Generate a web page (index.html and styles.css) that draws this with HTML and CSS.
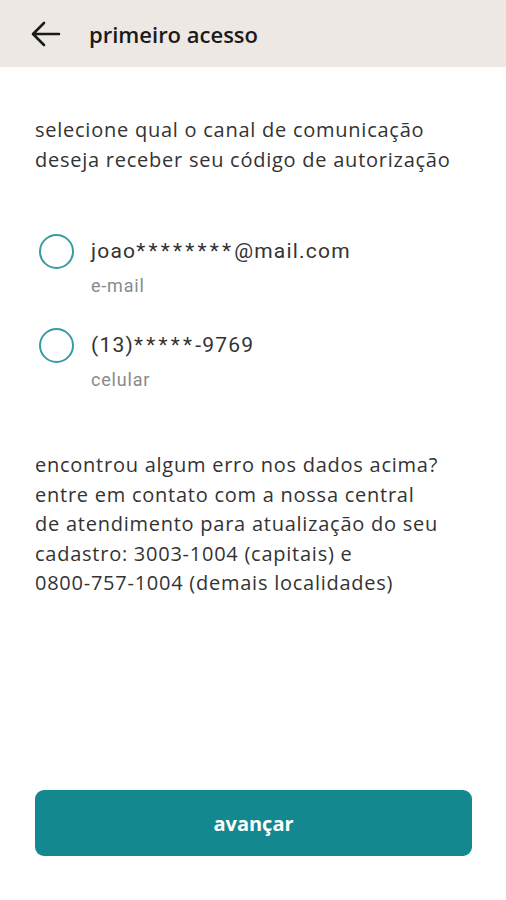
FILE: index.html
```html
<!DOCTYPE html>
<html lang="pt-BR">
<head>
    <meta charset="UTF-8">
    <meta name="viewport" content="width=device-width, initial-scale=1.0">
    <title>primeiro acesso</title>
    <link rel="stylesheet" href="styles.css">
</head>
<body>
    <div class="app">
        <header class="topbar">
            <button class="back" aria-label="voltar">
                <svg width="30" height="26" viewBox="0 0 30 26">
                    <path d="M28 13H3M13 2L2 13l11 11" fill="none" stroke="#1a1a1a" stroke-width="2.6" stroke-linecap="round" stroke-linejoin="round"/>
                </svg>
            </button>
            <h1>primeiro acesso</h1>
        </header>

        <main class="content">
            <p class="intro">selecione qual o canal de comunicação<br>deseja receber seu código de autorização</p>

            <!-- canais de comunicação -->
            <div class="options">
                <label class="option">
                    <input type="radio" name="canal" value="email">
                    <span class="radio"></span>
                    <span class="option-text">
                        <span class="option-value">joao<span class="mask">********</span>@mail.com</span>
                        <span class="option-label">e-mail</span>
                    </span>
                </label>
                <label class="option">
                    <input type="radio" name="canal" value="celular">
                    <span class="radio"></span>
                    <span class="option-text">
                        <span class="option-value">(13)<span class="mask">*****</span>-9769</span>
                        <span class="option-label">celular</span>
                    </span>
                </label>
            </div>

            <p class="help">encontrou algum erro nos dados acima?<br>entre em contato com a nossa central<br>de atendimento para atualização do seu<br>cadastro: 3003-1004 (capitais) e<br>0800-757-1004 (demais localidades)</p>
        </main>

        <div class="footer">
            <button class="next">avançar</button>
        </div>
    </div>
</body>
</html>
```

FILE: styles.css
```css
body {
    margin: 0;
    font-family: "Open Sans", sans-serif;
    background-color: #ffffff;
    color: #2b2b2b;
}
.app {
    height: 900px;
    display: flex;
    flex-direction: column;
}
.topbar {
    height: 67px;
    background-color: #ede8e3;
    display: flex;
    align-items: center;
    padding: 0 0 0 31px;
    box-sizing: border-box;
    flex-shrink: 0;
}
.back {
    background: none;
    border: none;
    padding: 0;
    width: 30px;
    height: 26px;
    margin-right: 28px;
    cursor: pointer;
}
.topbar h1 {
    margin: 0;
    font-size: 22px;
    font-weight: 600;
    color: #1a1a1a;
    letter-spacing: 0;
}
.content {
    flex-grow: 1;
    padding: 48px 35px 0 35px;
}
.intro, .help {
    margin: 0;
    font-size: 20px;
    line-height: 29.5px;
    letter-spacing: 0.75px;
    color: #333;
}
.options {
    margin-top: 60px;
    display: flex;
    flex-direction: column;
    gap: 24px;
}
.option {
    display: flex;
    align-items: flex-start;
    cursor: pointer;
}
.option input {
    display: none;
}
.radio {
    width: 31px;
    height: 31px;
    border: 2px solid #3a9ca1;
    border-radius: 50%;
    margin: 0 17px 0 4px;
    flex-shrink: 0;
}
.option-text {
    display: flex;
    flex-direction: column;
    font-family: Roboto, sans-serif;
}
.option-value {
    font-size: 21px;
    line-height: 34px;
    color: #333;
    letter-spacing: 1.2px;
}
.mask {
    letter-spacing: 3.2px;
}
.option-label {
    font-size: 18px;
    line-height: 36px;
    color: #8a8a8a;
    letter-spacing: 0.8px;
}
.help {
    margin-top: 52px;
}
.footer {
    padding: 0 34px 44px 35px;
}
.next {
    width: 100%;
    height: 66px;
    border: none;
    border-radius: 9px;
    background-color: #13888e;
    color: #ffffff;
    font-family: "Open Sans", sans-serif;
    font-size: 20px;
    font-weight: 700;
    cursor: pointer;
}
```
